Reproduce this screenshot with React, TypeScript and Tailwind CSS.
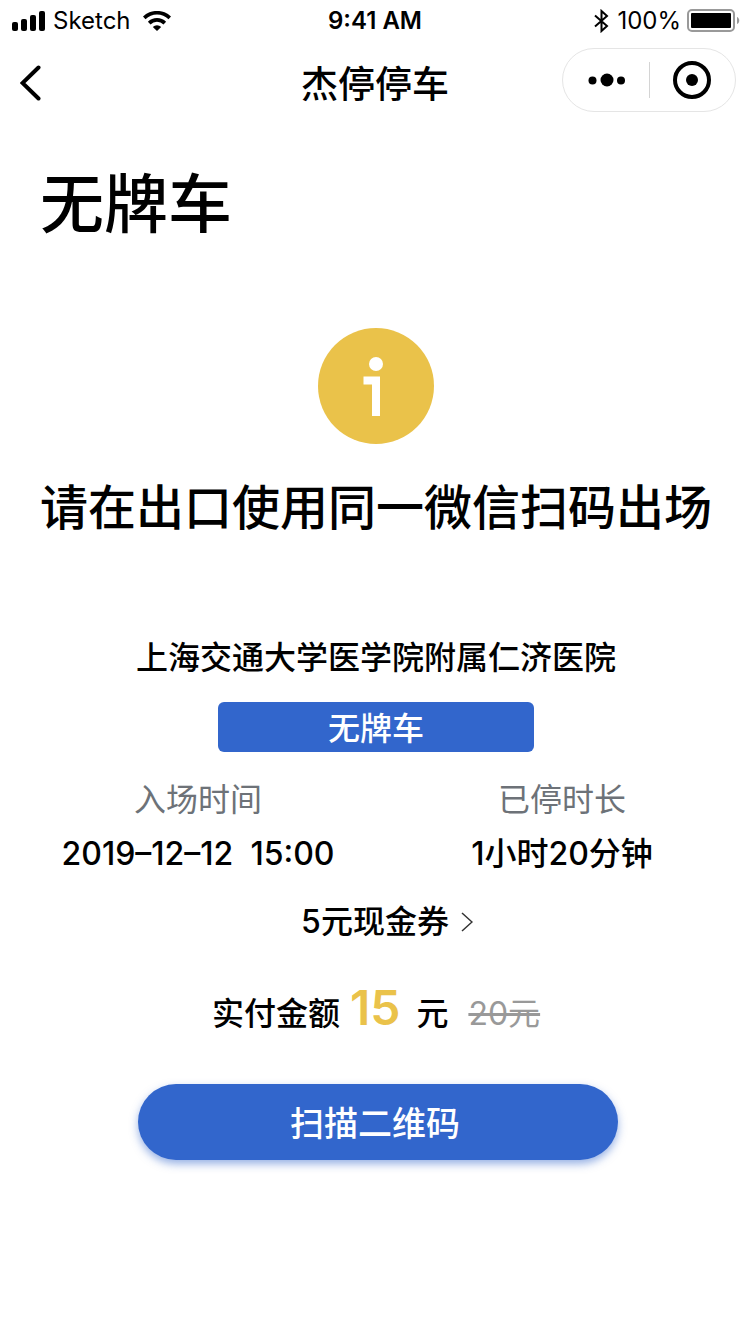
import React from "react";

function StatusBar() {
  return (
    <div className="grid h-[42px] grid-cols-3 items-center px-2.5 text-2xl leading-8">
      <div className="flex items-center pl-0.5">
        <svg width="33" height="20" viewBox="0 0 33 20" aria-label="信号" className="mr-2">
          <rect x="0" y="11" width="6" height="9" rx="2" />
          <rect x="9" y="8" width="6" height="12" rx="2" />
          <rect x="18" y="4" width="6" height="16" rx="2" />
          <rect x="27" y="0" width="6" height="20" rx="2" />
        </svg>
        <span>Sketch</span>
        <svg width="28" height="20" viewBox="0 0 28 20" aria-label="无线网络" className="ml-3">
          <path d="M0 5.6a20 20 0 0 1 28 0l-2.5 2.7a16.4 16.4 0 0 0-23 0z" />
          <path d="M4.9 10.8a13 13 0 0 1 18.2 0l-2.6 2.7a9.3 9.3 0 0 0-13 0z" />
          <path d="M9.8 15.9a6 6 0 0 1 8.4 0L14 20z" />
        </svg>
      </div>
      <div className="text-center font-semibold">9:41 AM</div>
      <div className="flex items-center justify-end">
        <svg width="15" height="24" viewBox="0 0 15 24" fill="none" stroke="currentColor" strokeWidth="2" aria-label="蓝牙" className="mr-2 shrink-0">
          <path d="M1 6.5 13 17l-5.5 5V2l5.500 5L1 17.5" />
        </svg>
        <span>100%</span>
        <svg width="53" height="24" viewBox="0 0 53 24" aria-label="电量" className="ml-1.5 shrink-0">
          <rect x="1" y="1" width="46" height="21" rx="4" fill="none" stroke="#999" strokeWidth="2" />
          <rect x="4" y="4" width="40" height="15" rx="1" />
          <path d="M50 8c3 1 3 6 0 7z" fill="#999" />
        </svg>
      </div>
    </div>
  );
}

function NavBar() {
  return (
    <header className="mt-1.5 grid h-16 grid-cols-[1fr_auto_1fr] items-center px-3.5">
      <button type="button" aria-label="返回" className="w-10 pt-1.5 pl-1.5">
        <svg width="21" height="36" viewBox="0 0 21 36" fill="none" stroke="currentColor" strokeWidth="4" strokeLinecap="round">
          <path d="M18.5 2.5 2.5 18l16 15.5" />
        </svg>
      </button>
      <div className="pt-2.5 text-[37px] leading-10 font-medium">杰停停车</div>
      <div className="flex h-16 w-[174px] items-center justify-self-end rounded-full border border-[#e5e5e5]">
        <button type="button" aria-label="更多" className="flex flex-1 justify-center">
          <svg width="38" height="14" viewBox="0 0 38 14">
            <circle cx="5.500" cy="7.5" r="4" />
            <circle cx="20" cy="7" r="6.5" />
            <circle cx="34" cy="7.5" r="4" />
          </svg>
        </button>
        <span className="h-9 w-px bg-[#d4d4d4]" />
        <button type="button" aria-label="关闭" className="flex flex-1 justify-center">
          <svg width="38" height="38" viewBox="0 0 38 38">
            <circle cx="19" cy="19" r="17" fill="none" stroke="currentColor" strokeWidth="4" />
            <circle cx="19" cy="19" r="6" />
          </svg>
        </button>
      </div>
    </header>
  );
}

function Detail({ label, value }: { label: string; value: string }) {
  return (
    <div>
      <dt className="font-normal text-[#6d7278]">{label}</dt>
      <dd className="mt-3.5 font-medium whitespace-pre">{value}</dd>
    </div>
  );
}

export default function App() {
  return (
    <div className="min-h-screen bg-white font-['Inter','Noto_Sans_CJK_SC',sans-serif] text-black" lang="zh-CN">
      <StatusBar />
      <NavBar />
      <main className="pl-0.5 text-[32px] leading-10">
        <h1 className="mt-[52px] pl-[38px] text-[64px] leading-[80px] font-medium">无牌车</h1>
        <section className="mt-[84px] flex flex-col items-center">
          <svg width="116" height="116" viewBox="0 0 116 116" aria-label="提示">
            <circle cx="58" cy="58" r="58" fill="#eac24a" />
            <circle cx="58" cy="36" r="7" fill="#fff" />
            <path d="M45.5 48.5H62V88h-8V56.5h-8.5z" fill="#fff" />
          </svg>
          <h2 className="mt-8 text-5xl leading-[64px] font-medium whitespace-nowrap">请在出口使用同一微信扫码出场</h2>
        </section>
        <section className="mt-[98px] flex flex-col items-center">
          <h3 className="font-medium">上海交通大学医学院附属仁济医院</h3>
          <div className="mt-6 flex h-[50px] w-[316px] items-center justify-center rounded-md bg-[#3266cc] pt-1 font-medium text-white">
            无牌车
          </div>
        </section>
        <dl className="mt-7 grid grid-cols-2 pr-1.5 pl-3.5 text-center">
          <Detail label="入场时间" value="2019–12–12  15:00" />
          <Detail label="已停时长" value="1小时20分钟" />
        </dl>
        <button type="button" className="mx-auto mt-7 flex items-center gap-3 pl-[22px] font-medium">
          5元现金券
          <svg width="12" height="20" viewBox="0 0 12 20" fill="none" stroke="#333" strokeWidth="1.5">
            <path d="m1 1 10 9-10 9" />
          </svg>
        </button>
        <p className="mt-[38px] flex items-baseline justify-center font-medium">
          <span>实付金额</span>
          <strong className="ml-2.5 text-5xl leading-[56px] font-semibold text-[#eac24a]">15</strong>
          <span className="ml-4">元</span>
          <del className="ml-5 font-normal text-[#999]">20元</del>
        </p>
        <div className="mt-12 flex justify-center pl-1">
          <button
            type="button"
            className="h-[76px] w-[480px] rounded-full bg-[#3266cc] pt-1 pr-1.5 text-[34px] font-medium text-white shadow-[0_4px_8px_rgba(50,102,204,0.5)]"
          >
            扫描二维码
          </button>
        </div>
      </main>
    </div>
  );
}
